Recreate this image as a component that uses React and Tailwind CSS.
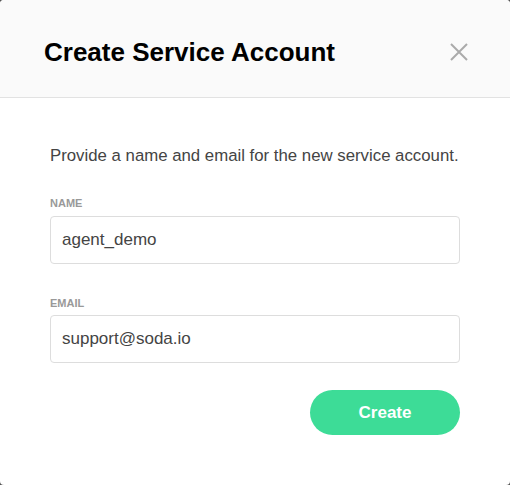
import React from "react";

const App = () => {
  return (
    <div className="h-[485px] w-[510px] bg-[#555]" style={{ fontFamily: '"Liberation Sans", Arial, sans-serif' }}>
      <div className="flex h-full w-full flex-col overflow-hidden rounded-[4px] bg-white">
        <div className="flex h-[98px] shrink-0 items-center justify-between border-b border-[#e2e2e2] bg-[#fafafa] pl-[44px] pr-[41px] pt-[7px]">
          <h1 className="text-[26px] font-bold text-black">Create Service Account</h1>
          <button type="button" className="flex h-[20px] w-[20px] items-center justify-center">
            <svg width="18" height="18" viewBox="0 0 18 18" fill="none" stroke="#aaa" strokeWidth="2">
              <path d="M1 1L17 17M17 1L1 17" />
            </svg>
          </button>
        </div>

        <div className="flex flex-col px-[50px] pt-[45px]">
          <p className="whitespace-nowrap text-[16.8px] text-[#444]">Provide a name and email for the new service account.</p>

          <label className="mt-[27px] text-[11px] font-bold text-[#999]">NAME</label>
          <input
            defaultValue="agent_demo"
            className="mt-[4px] h-[48px] w-full rounded-[4px] border border-[#ddd] px-[11px] text-[17px] text-[#444] outline-none"
          />

          <label className="mt-[31px] text-[11px] font-bold text-[#999]">EMAIL</label>
          <input
            defaultValue="support@soda.io"
            className="mt-[4px] h-[48px] w-full rounded-[4px] border border-[#ddd] px-[11px] text-[17px] text-[#444] outline-none"
          />

          <div className="mt-[27px] flex justify-end">
            <button
              type="button"
              className="h-[45px] w-[150px] rounded-full bg-[#3ddc97] text-[17px] font-bold text-white"
            >
              Create
            </button>
          </div>
        </div>
      </div>
    </div>
  );
};

export default App;
